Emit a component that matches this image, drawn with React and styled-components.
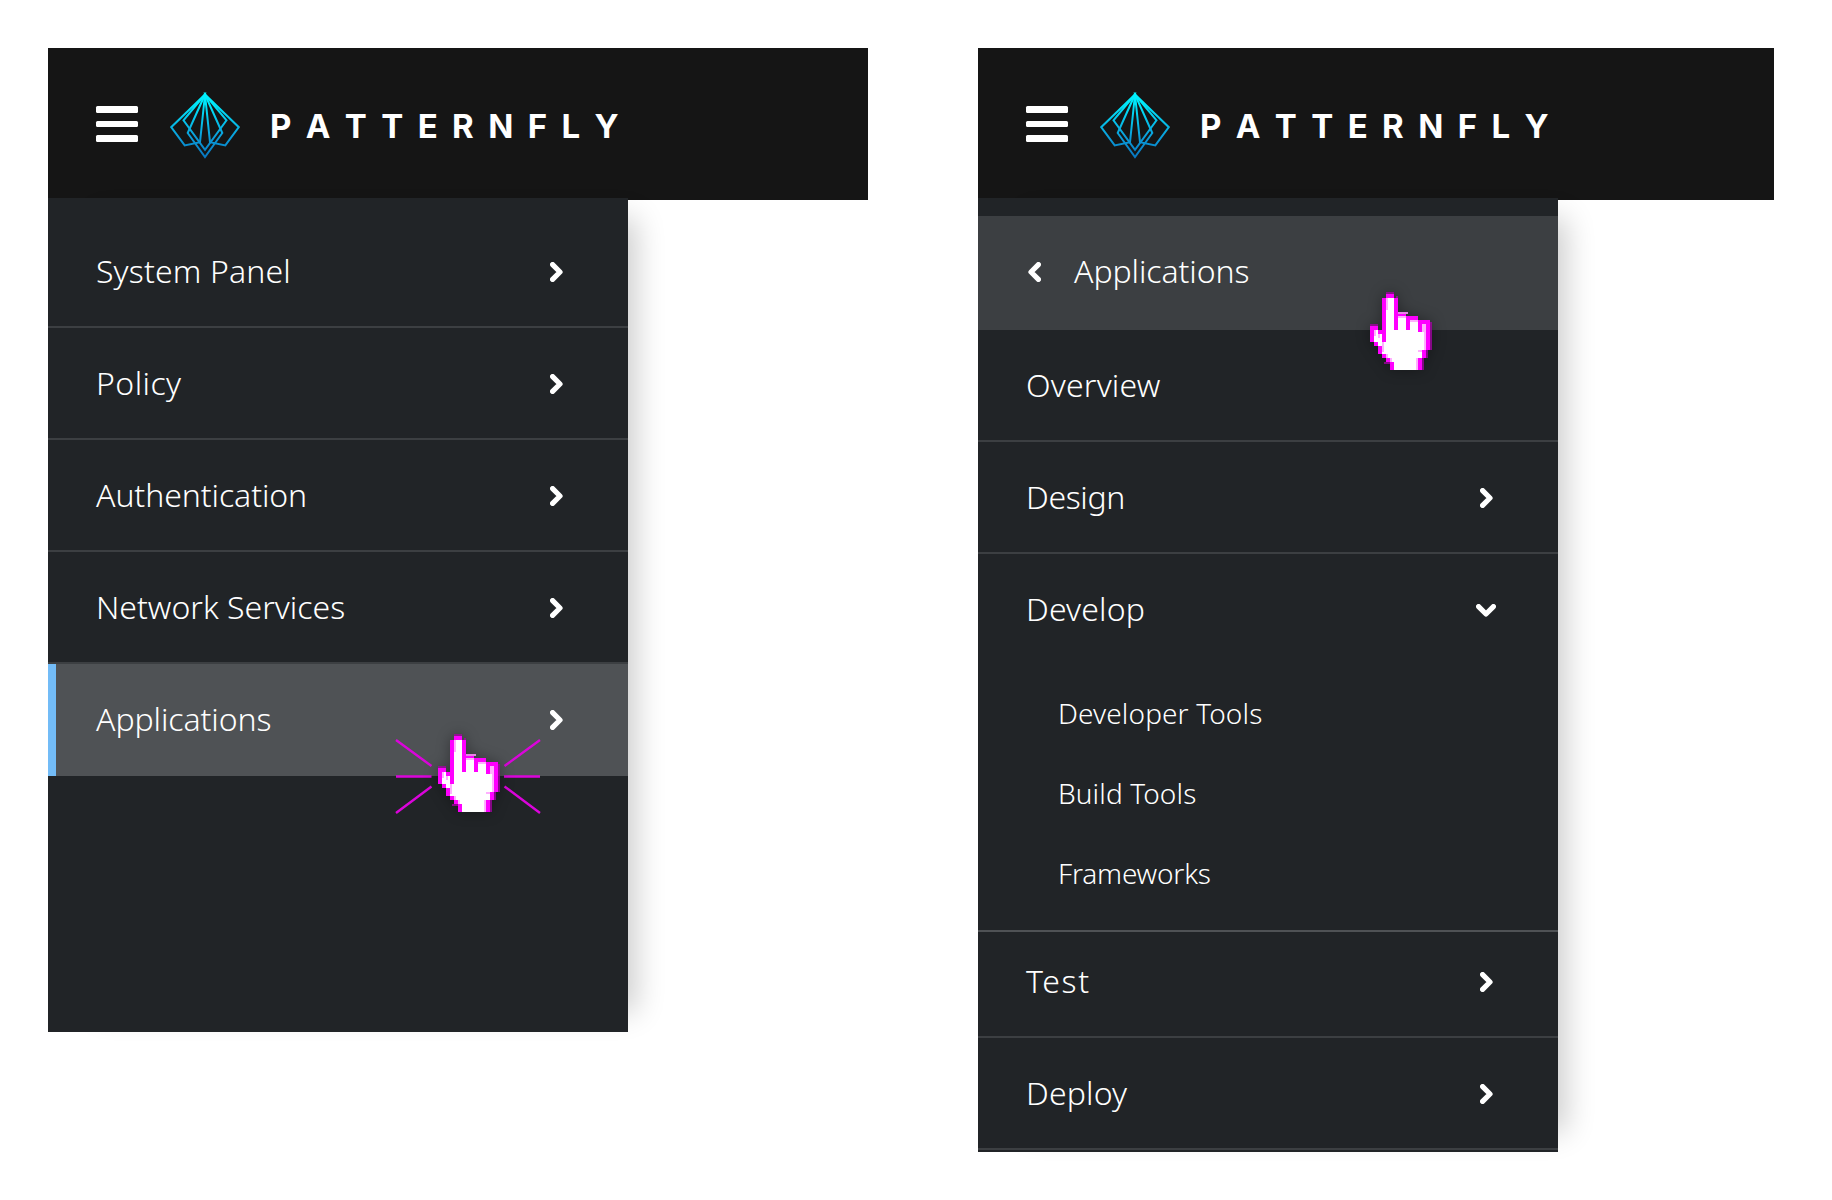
import React from 'react';
import styled, { createGlobalStyle } from 'styled-components';

const GlobalStyle = createGlobalStyle`
  *, *::before, *::after { box-sizing: border-box; }
  body { margin: 0; background: #fff; }
`;

const Page = styled.main`
  display: flex;
  align-items: flex-start;
  gap: 110px;
  padding: 48px;
  width: 1832px;
  height: 1200px;
  font-family: 'Noto Sans', 'Open Sans', sans-serif;
  color: #fff;
`;

const Screen = styled.section`
  display: flex;
  flex-direction: column;
  flex: none;
  width: ${p => p.$width}px;
`;

const Masthead = styled.header`
  display: flex;
  align-items: center;
  height: 152px;
  padding: 0 48px;
  background: #151515;
`;

const MenuButton = styled.button`
  display: flex;
  flex-direction: column;
  justify-content: space-between;
  width: 42px;
  height: 36px;
  padding: 0;
  border: 0;
  background: none;
`;

const MenuBar = styled.span`
  height: 6.6px;
  border-radius: 1.5px;
  background: #fff;
`;

const Brand = styled.div`
  display: flex;
  align-items: center;
  margin-left: 31px;
`;

const LogoMark = styled.svg`
  display: block;
  width: 72px;
  height: 68px;
  margin-top: 3px;
`;

const Wordmark = styled.span`
  margin: 4px 0 0 29px;
  font: 700 33px/40px Inter, sans-serif;
  font-kerning: none;
  letter-spacing: 14.4px;
  white-space: nowrap;
`;

const Nav = styled.nav`
  display: flex;
  flex-direction: column;
  width: 580px;
  height: ${p => p.$height}px;
  margin-top: -2px;
  padding-top: 18px;
  background: #212427;
  box-shadow: 28px 0 28px -20px rgba(0, 0, 0, 0.2);
`;

const NavItem = styled.a`
  position: relative;
  display: flex;
  align-items: center;
  flex: none;
  height: 112px;
  padding: 0 65px 0 48px;
  border-bottom: 2px solid #3c3f42;
`;

const ActiveItem = styled(NavItem)`
  padding-left: 40px;
  border-left: 8px solid #73bcf7;
  border-bottom: 0;
  padding-bottom: 2px;
  background: #4f5255;
`;

const BackItem = styled(NavItem)`
  height: 114px;
  gap: 33px;
  padding: 0 48px 4px 50px;
  border-bottom: 0;
  background: #3c3f42;
`;

const ExpandedItem = styled(NavItem)`
  height: 110px;
  padding-right: 62px;
  border-bottom: 0;
`;

const CompactItem = styled(NavItem)`
  height: 106px;
  padding-bottom: 6px;
`;

const Label = styled.span`
  flex: 1;
  margin-top: -1px;
  font-size: 32px;
  font-weight: 300;
  line-height: 44px;
  letter-spacing: ${p => p.$track || 0}px;
  white-space: nowrap;
`;

const SubNav = styled.div`
  display: flex;
  flex-direction: column;
  flex: none;
  height: 268px;
  padding: 10px 0 16px 80px;
  border-bottom: 2px solid #4f5255;
`;

const SubItem = styled.a`
  height: 80px;
  font-size: 28px;
  font-weight: 300;
  line-height: 79px;
  letter-spacing: ${p => p.$track || 0}px;
  white-space: nowrap;
`;

const ChevronIcon = styled.svg`
  display: block;
  flex: none;
  margin-top: 2px;
  fill: none;
  stroke: #fff;
  stroke-width: 5.2;
  stroke-linecap: round;
  stroke-linejoin: round;
`;

const HandPointer = styled.svg`
  position: absolute;
  left: ${p => p.$x}px;
  top: ${p => p.$y}px;
  width: 64px;
  height: 80px;
  overflow: visible;
  z-index: 2;
  filter: drop-shadow(0 0 7px rgba(0, 0, 0, 0.35));
`;

const ClickRays = styled.svg`
  position: absolute;
  left: 339px;
  top: 74px;
  width: 146px;
  height: 76px;
  z-index: 1;
  fill: none;
  stroke: #db04db;
  stroke-width: 2.4;
`;

const chevrons = {
  right: { w: 13, h: 20, d: 'M2.6 2.6 10 10 2.6 17.4' },
  left: { w: 13, h: 20, d: 'M10.4 2.6 3 10l7.4 7.4' },
  down: { w: 20, h: 13, d: 'M2.6 2.6 10 10l7.4-7.4' },
};

function Chevron({ to = 'right' }) {
  const { w, h, d } = chevrons[to];
  return (
    <ChevronIcon width={w} height={h} viewBox={`0 0 ${w} ${h}`}>
      <path d={d} />
    </ChevronIcon>
  );
}

function Logo({ id }) {
  return (
    <LogoMark viewBox="169 91 72 68">
      <defs>
        <linearGradient id={id} gradientUnits="userSpaceOnUse" x1="205" y1="92" x2="205" y2="158">
          <stop offset="0" stopColor="#00f4ff" />
          <stop offset="0.2" stopColor="#00e4f8" />
          <stop offset="0.65" stopColor="#0a9fdb" />
          <stop offset="1" stopColor="#0873bd" />
        </linearGradient>
      </defs>
      <g fill="none" stroke={`url(#${id})`} strokeWidth="2">
        <path d="M205 93.5 171.2 126.2 184.7 144.4 200 141.2Z" />
        <path d="M205 93.5 238.8 126.2 225.3 144.4 210 141.2Z" />
        <path d="M205 93.5 183.5 119.3 205 148.9 226.5 119.3Z" />
        <path d="M205 93.5 187.7 132 205 156 222.3 132Z" />
      </g>
    </LogoMark>
  );
}

const outline = [
  [16, 0, 8, 4], [12, 4, 4, 44], [24, 4, 4, 32],
  [28, 20, 8, 2], [36, 22, 4, 14], [40, 22, 8, 4],
  [48, 26, 4, 12], [52, 26, 8, 4], [56, 30, 4, 26],
  [52, 56, 4, 8], [48, 64, 4, 12],
  [0, 32, 8, 4], [0, 36, 4, 12], [8, 36, 4, 4],
  [4, 48, 4, 4], [8, 52, 4, 8], [12, 60, 4, 4],
  [16, 64, 4, 4], [20, 68, 4, 8],
];
const blush = [
  [16, 4, 2, 12], [28, 22, 8, 2], [40, 26, 8, 2], [52, 30, 2, 8],
  [54, 30, 2, 26], [48, 56, 4, 2], [46, 64, 2, 12], [4, 36, 2, 6],
  [8, 40, 2, 4], [12, 48, 2, 4], [12, 52, 2, 6], [16, 60, 2, 4], [20, 64, 2, 4],
];
const shade = [
  [16, -2, 8, 2], [0, 30, 8, 2], [60, 28, 2, 28],
  [56, 56, 2, 8], [52, 64, 2, 12], [14, 68, 6, 2], [26, 2, 2, 2],
];

const Pixels = ({ cells, fill, opacity }) => (
  <g fill={fill} opacity={opacity}>
    {cells.map(([x, y, w, h]) => (
      <rect key={`${x}-${y}`} x={x} y={y} width={w} height={h} />
    ))}
  </g>
);

function Hand({ x, y }) {
  return (
    <HandPointer $x={x} $y={y} viewBox="0 0 64 80" shapeRendering="crispEdges">
      <path
        fill="#fff"
        d="M16 4h8v32h4V22h8v14h4V26h8v12h4v-8h4v26h-4v8h-4v12H24v-8h-4v-4h-4v-4h-4v-8H8v-4H4V36h4v4h4v8h4z"
      />
      <Pixels cells={blush} fill="#ffb0ff" />
      <Pixels cells={shade} fill="#a800a8" opacity="0.75" />
      <Pixels cells={[[28, 18, 10, 2]]} fill="#e884e8" />
      <Pixels cells={outline} fill="#ff00ff" />
    </HandPointer>
  );
}

function Header({ id }) {
  return (
    <Masthead>
      <MenuButton aria-label="Menu">
        <MenuBar />
        <MenuBar />
        <MenuBar />
      </MenuButton>
      <Brand>
        <Logo id={id} />
        <Wordmark>PATTERNFLY</Wordmark>
      </Brand>
    </Masthead>
  );
}

export default function App() {
  return (
    <>
      <GlobalStyle />
      <Page>
        <Screen $width={820}>
          <Header id="mark-root" />
          <Nav $height={834}>
            <NavItem><Label $track={0.15}>System Panel</Label><Chevron /></NavItem>
            <NavItem><Label $track={0.45}>Policy</Label><Chevron /></NavItem>
            <NavItem><Label $track={-0.08}>Authentication</Label><Chevron /></NavItem>
            <NavItem><Label>Network Services</Label><Chevron /></NavItem>
            <ActiveItem>
              <Label $track={-0.08}>Applications</Label>
              <Chevron />
              <ClickRays viewBox="395 738 146 76">
                <path d="M396 740 431.5 766M396 776.5h35.5M396 813l35.5-26.5M540 740l-35.5 26M504 776.5h36M504.5 786.5 540 813" />
              </ClickRays>
              <Hand x={382} y={72} />
            </ActiveItem>
          </Nav>
        </Screen>

        <Screen $width={796}>
          <Header id="mark-drill" />
          <Nav $height={954}>
            <BackItem>
              <Chevron to="left" />
              <Label $track={-0.08}>Applications</Label>
              <Hand x={392} y={78} />
            </BackItem>
            <NavItem><Label $track={0.2}>Overview</Label></NavItem>
            <NavItem><Label $track={-0.35}>Design</Label><Chevron /></NavItem>
            <ExpandedItem><Label $track={0.15}>Develop</Label><Chevron to="down" /></ExpandedItem>
            <SubNav>
              <SubItem $track={0.12}>Developer Tools</SubItem>
              <SubItem $track={0.12}>Build Tools</SubItem>
              <SubItem $track={-0.2}>Frameworks</SubItem>
            </SubNav>
            <CompactItem><Label $track={1.6}>Test</Label><Chevron /></CompactItem>
            <NavItem><Label $track={0.15}>Deploy</Label><Chevron /></NavItem>
          </Nav>
        </Screen>
      </Page>
    </>
  );
}
